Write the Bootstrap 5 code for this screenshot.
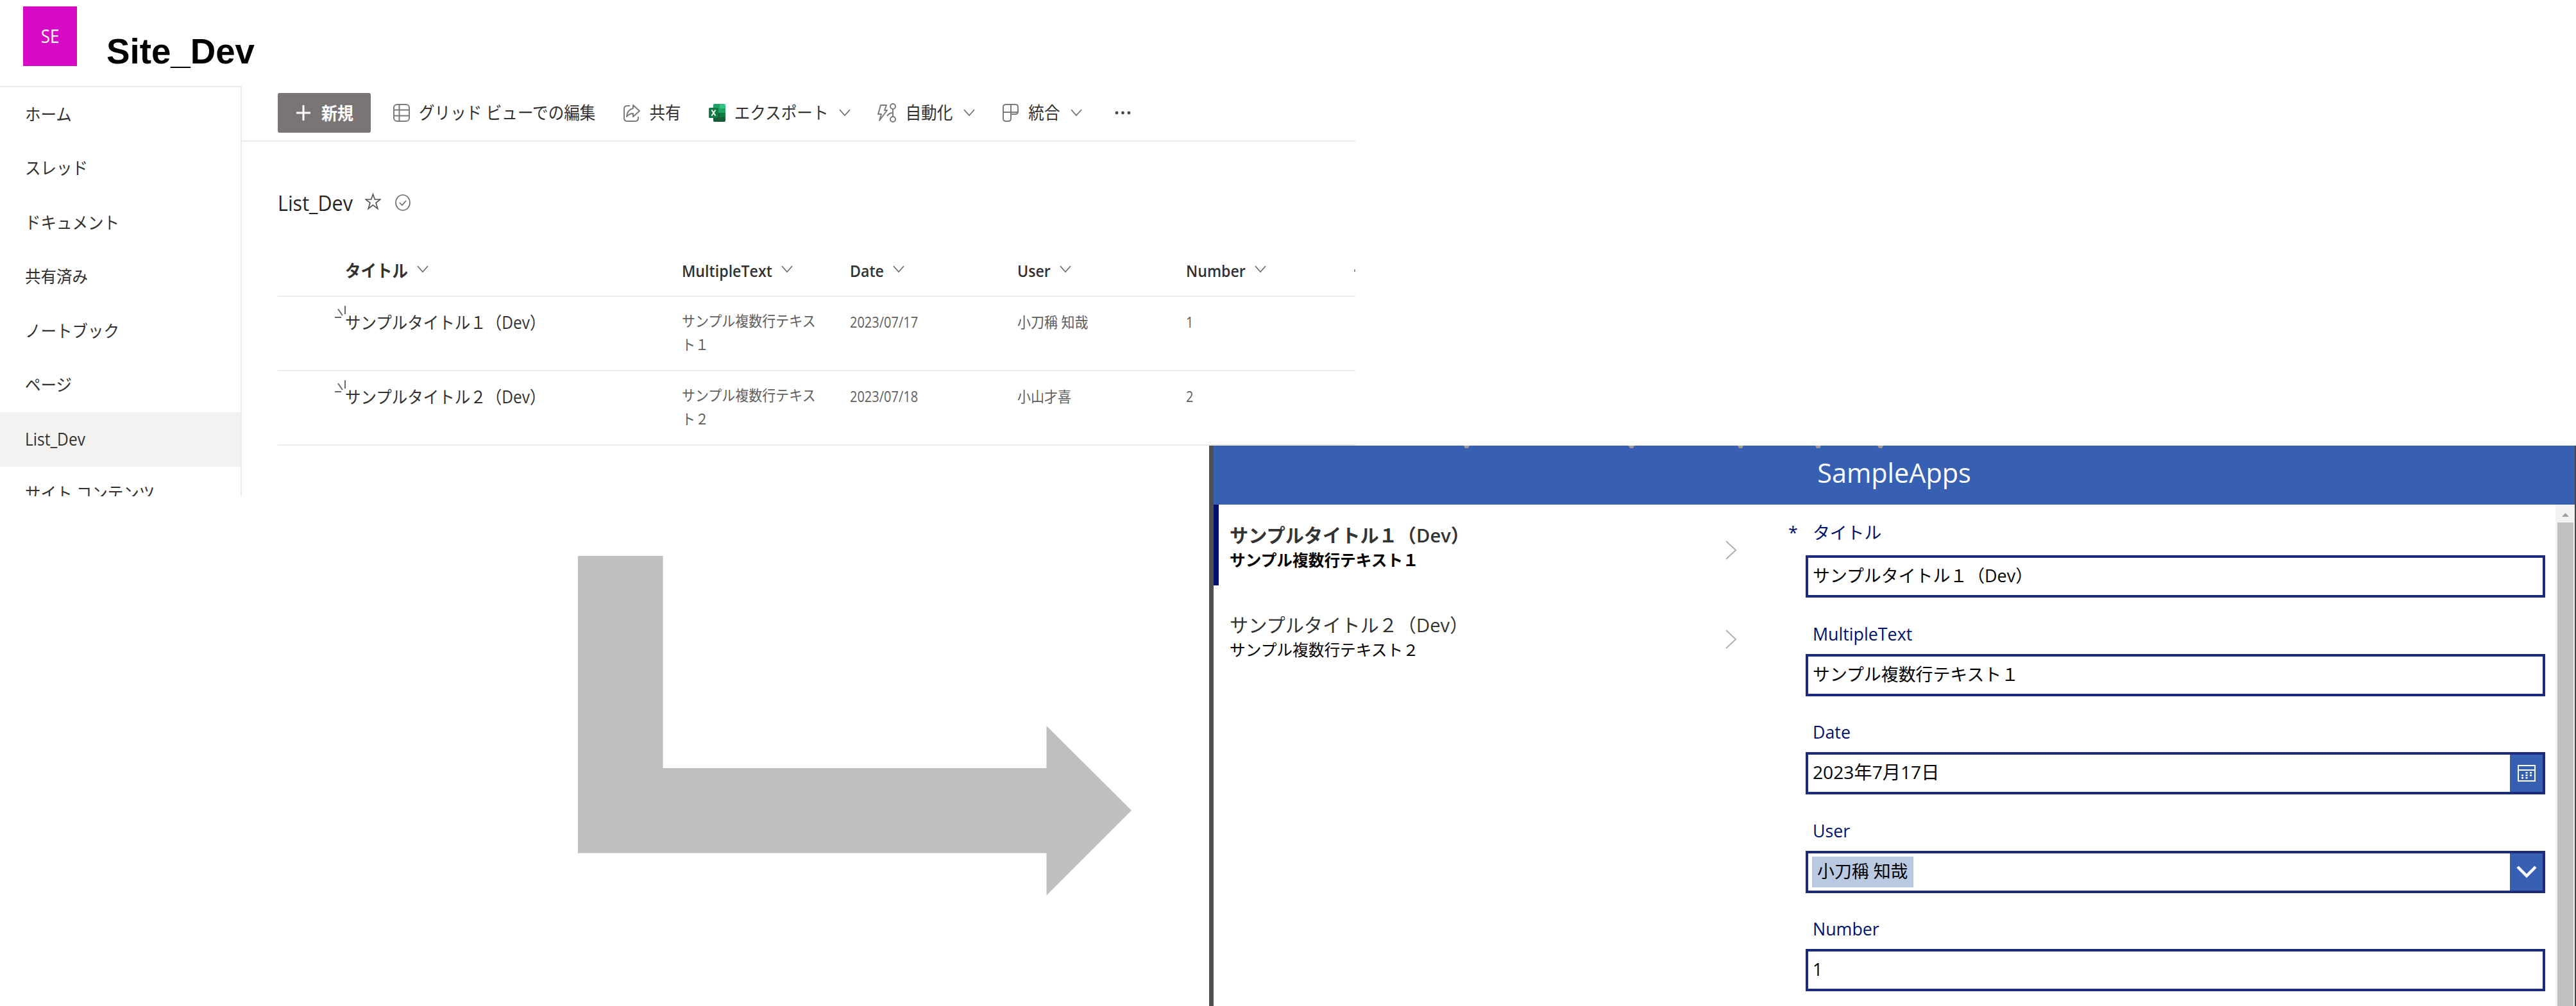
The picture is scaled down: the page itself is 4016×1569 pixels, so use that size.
<!DOCTYPE html>
<html lang="ja">
<head>
  <meta charset="UTF-8" />
  <meta name="viewport" content="width=device-width, initial-scale=1.0"/>
  <title>Site_Dev</title>
  <link rel="stylesheet" href="https://cdn.jsdelivr.net/npm/bootstrap@5.3.2/dist/css/bootstrap.min.css"/>
  <style>
    body {
      font-family: "Open Sans", "Noto Sans CJK JP", sans-serif;
      background: #fff;
      color: #323130;
      overflow: hidden;
    }
    svg {
      display: block;
      flex: none;
    }
    svg:not([fill]) {
      fill: none;
    }
    .board {
      display: grid;
      grid-template-columns: 1885px 2131px;
      grid-template-rows: 695px 874px;
      width: 4016px;
      height: 1569px;
    }

    /* SharePoint list */
    .site {
      grid-area: 1 / 1 / 3 / 3;
      width: 2113px;
      height: 774px;
      overflow: hidden;
    }
    .tx {
      display: inline-block;
      transform: scaleY(1.09);
      white-space: nowrap;
    }
    .site-head {
      height: 134px;
      padding: 10px 0 0 36px;
    }
    .site-logo {
      width: 84px;
      height: 93px;
      background: #d60ac4;
      color: #fff;
      font-size: 26px;
    }
    .site-title {
      margin: 38px 0 0 46px;
      font: bold 54.7px/64px "Liberation Sans", sans-serif;
      color: #000;
    }
    .side-nav {
      width: 377px;
      height: 640px;
      border-top: 2px solid #edebe9;
      border-right: 2px solid #edebe9;
      flex: none;
    }
    .side-nav .nav-link {
      height: 84.5px;
      flex: none;
      padding: 0 0 0 39px;
      display: flex;
      align-items: center;
      font-size: 24.5px;
      color: #323130;
    }
    .side-nav .nav-link.active {
      background: #f3f2f1;
    }
    .cmd-bar {
      height: 87px;
      padding: 11px 0 13px 56px;
      border-bottom: 2px solid #edebe9;
      font-size: 24.6px;
      line-height: 62px;
    }
    .btn-new {
      width: 145px;
      height: 62px;
      padding: 0 0 0 27px;
      border-radius: 3px;
      background: #7a7574;
      color: #fff;
      font-size: 25px;
      font-weight: 700;
      line-height: 60px;
    }
    .btn-new:hover { background: #605e5c; color: #fff; }
    .cmd {
      display: flex;
      align-items: center;
      gap: 14px;
      flex: none;
    }
    .cmd .chev { margin-left: 3px; }
    .list-name {
      height: 168px;
      padding: 24px 0 0 56px;
      font-size: 30.5px;
      font-weight: 500;
      color: #252423;
    }
    .list-table {
      width: 1680px;
      margin: 0 0 0 56px;
      table-layout: fixed;
      color: #605e5c;
      font-size: 21px;
      line-height: 34px;
    }
    .list-table th, .list-table td {
      padding: 0;
      border-bottom: 2px solid #edebe9;
      background: none;
      color: inherit;
      vertical-align: top;
    }
    .list-table th {
      height: 73px;
      padding-top: 16px;
      font-size: 23.2px;
      font-weight: 600;
      color: #323130;
    }
    .list-table th .chev { margin: -4px 0 0 14px; }
    .list-table td {
      height: 116px;
      padding-top: 22px;
    }
    .list-table td.item-title {
      font-size: 24.5px;
      color: #323130;
      padding-top: 23px;
      position: relative;
    }
    .list-table td.item-title svg {
      position: absolute;
      left: -16px;
      top: 14px;
    }
    .list-table .date { font-size: 20px; transform: scaleY(1.15); }

    .flow-arrow {
      grid-area: 2 / 1;
      margin: 172px 0 0 901px;
    }

    /* Power Apps window */
    .app {
      grid-area: 2 / 2;
      border-left: 7px solid #505050;
      border-right: 2px solid #444;
      background: #fff;
      overflow: hidden;
    }
    .app-head {
      height: 92px;
      flex: none;
      background: #3760b2;
      color: #fff;
      font-size: 41.4px;
      line-height: 84px;
      text-align: center;
      position: relative;
    }
    .app-head svg {
      position: absolute;
      left: 0;
      top: 0;
    }
    .gallery {
      width: 880px;
      flex: none;
    }
    .gallery-item {
      height: 140px;
      padding: 0 64px 0 17px;
      border-left: 8px solid transparent;
      color: #000;
      background-clip: padding-box;
    }
    .gallery-item.selected {
      font-weight: 700;
    }
    .gallery-item.selected .sel-bar { background: #00126b; }
    .sel-bar {
      width: 8px;
      height: 126px;
      margin-left: -25px;
      margin-right: 17px;
      align-self: flex-start;
    }
    .g-title {
      font-size: 29.2px;
      line-height: 40px;
      color: #333;
    }
    .selected .g-title { font-weight: 600; }
    .g-sub {
      font-size: 24.7px;
      line-height: 37px;
    }
    .edit-form {
      padding: 22px 0 0 43px;
      width: 1212px;
    }
    .field {
      height: 153.6px;
    }
    .field .form-label {
      display: block;
      height: 57px;
      margin: 0;
      padding-left: 11px;
      font-size: 26.8px;
      line-height: 51px;
      color: #00126b;
    }
    .field:first-child .form-label {
      line-height: 43px;
    }
    .field .req {
      display: inline-block;
      width: 38px;
      margin-left: -38px;
    }
    .field .form-control {
      display: flex;
      width: 1153px;
      height: 66px;
      padding: 0 0 0 7px;
      border: 4px solid #1c2b7c;
      border-radius: 0;
      font-size: 26.9px;
      line-height: 55px;
      color: #000;
    }
    .field .form-control.date-box { font-size: 28.2px; }
    .chip {
      height: 48px;
      margin: 5px 0 0 -1px;
      padding: 0 9px 0 8px;
      background: #b9c9e1;
      line-height: 46px;
    }
    .pick {
      width: 51px;
      margin-left: auto;
      background: #3760b2;
    }
    .scroll {
      width: 30px;
      padding: 0 2px 0 3px;
      background: #f3f3f3;
      margin-left: auto;
    }
    .scroll-thumb {
      background: #c1c1c1;
    }
  </style>
</head>
<body>

<div class="board">

  <!-- SharePoint site -->
  <section class="site">
    <header class="site-head d-flex">
      <div class="site-logo d-flex align-items-center justify-content-center"><span class="tx">SE</span></div>
      <h1 class="site-title">Site_Dev</h1>
    </header>

    <div class="d-flex">
      <nav class="side-nav nav flex-column flex-nowrap overflow-hidden">
        <a class="nav-link"><span class="tx">ホーム</span></a>
        <a class="nav-link"><span class="tx">スレッド</span></a>
        <a class="nav-link"><span class="tx">ドキュメント</span></a>
        <a class="nav-link"><span class="tx">共有済み</span></a>
        <a class="nav-link"><span class="tx">ノートブック</span></a>
        <a class="nav-link"><span class="tx">ページ</span></a>
        <a class="nav-link active"><span class="tx">List_Dev</span></a>
        <a class="nav-link"><span class="tx">サイト コンテンツ</span></a>
      </nav>

      <main class="flex-grow-1">
        <div class="cmd-bar d-flex align-items-center">
          <button class="btn btn-new d-flex align-items-center">
            <svg width="24" height="24" viewBox="0 0 24 24" stroke="#fff" stroke-width="3"><path d="M12 0v24M1 12h22"/></svg>
            <span class="tx ms-3">新規</span>
          </button>
          <div class="cmd" style="margin-left:35px">
            <svg width="26" height="28" viewBox="0 0 26 28" stroke="#7d7b79" stroke-width="2"><rect x="1" y="1" width="24" height="26" rx="5"/><path d="M9.500 1v26M1 9.500h24M1 18.500h24"/></svg>
            <span class="tx">グリッド ビューでの編集</span>
          </div>
          <div class="cmd" style="margin-left:44px">
            <svg width="26" height="28" viewBox="0 0 26 28" stroke="#7d7b79" stroke-width="2"><path d="M10 3H6Q1 3 1 8v14q0 5 5 5h12q5 0 5-5v-2"/><path d="M15 2l10 9-10 9v-5q-6 0-10 5Q6 9 15 7z" stroke-linejoin="round"/></svg>
            <span class="tx">共有</span>
          </div>
          <div class="cmd" style="margin-left:43px">
            <svg width="26" height="28" viewBox="0 0 26 28"><path d="M7 2q0-2 2-2h8v14H7z" fill="#21a366"/><path d="M17 0h7q2 0 2 2v5h-9z" fill="#33c481"/><path d="M17 7h9v7h-9z" fill="#21a366"/><path d="M7 14h10v7H7z" fill="#185c37"/><path d="M17 14h9v7h-9z" fill="#107c41"/><path d="M7 21h19v5q0 2-2 2H9q-2 0-2-2z" fill="#185c37"/><rect y="6" width="15" height="16" rx="1.500" fill="#107c41"/><path d="M4.500 9.500l6 9M10.500 9.500l-6 9" stroke="#fff" stroke-width="2"/></svg>
            <span class="tx">エクスポート</span>
            <svg class="chev" width="18" height="12" viewBox="0 0 18 12" stroke="#6b6967" stroke-width="1.600"><path d="M1 1l8 9 8-9"/></svg>
          </div>
          <div class="cmd" style="margin-left:42px">
            <svg width="29" height="30" viewBox="0 0 29 30" stroke="#7d7b79" stroke-width="2"><path d="M5 3h9l-3 8h4L3 27l3-10H1z" stroke-linejoin="round"/><circle cx="24" cy="5" r="4"/><circle cx="24" cy="25" r="4"/><path d="M24 9v12M15 20q3-5 9-5"/></svg>
            <span class="tx">自動化</span>
            <svg class="chev" width="18" height="12" viewBox="0 0 18 12" stroke="#6b6967" stroke-width="1.600"><path d="M1 1l8 9 8-9"/></svg>
          </div>
          <div class="cmd" style="margin-left:43px">
            <svg width="26" height="28" viewBox="0 0 26 28" stroke="#7d7b79" stroke-width="2"><path d="M5 1h15q4 0 4 4v7q0 4-4 4h-7v7q0 4-4 4H5q-4 0-4-4V5q0-4 4-4zM13 1v15M1 13h23"/></svg>
            <span class="tx">統合</span>
            <svg class="chev" width="18" height="12" viewBox="0 0 18 12" stroke="#6b6967" stroke-width="1.600"><path d="M1 1l8 9 8-9"/></svg>
          </div>
          <svg style="margin-left:51px" width="25" height="6" viewBox="0 0 25 6" fill="#484644"><circle cx="3" cy="3" r="2.400"/><circle cx="12.500" cy="3" r="2.400"/><circle cx="22" cy="3" r="2.400"/></svg>
        </div>

        <div class="list-name d-flex align-items-center">
          <span class="tx">List_Dev</span>
          <svg style="margin:-6px 0 0 19px" width="25" height="28" viewBox="0 0 25 28" stroke="#555" stroke-width="1.700"><path d="M12.500 3l2.800 8H24l-7 5.300 2.800 9.200-7.300-5.700-7.300 5.700L8 16.300 1 11h8.700z"/></svg>
          <svg style="margin:-3px 0 0 22px" width="24" height="26" viewBox="0 0 24 26" stroke="#6b6967" stroke-width="1.600"><ellipse cx="12" cy="13" rx="11" ry="12"/><path d="M7 13l4 4 6-7"/></svg>
        </div>

        <table class="table list-table mb-0">
          <colgroup>
            <col style="width:105px"><col style="width:525px"><col style="width:262px"><col style="width:261px"><col style="width:263px"><col>
          </colgroup>
          <thead>
            <tr>
              <th></th>
              <th><div class="d-flex align-items-center"><span class="tx" style="font-size:24.500px;font-weight:700">タイトル</span><svg class="chev" width="18" height="12" viewBox="0 0 18 12" stroke="#6b6967" stroke-width="1.600"><path d="M1 1l8 9 8-9"/></svg></div></th>
              <th><div class="d-flex align-items-center"><span class="tx">MultipleText</span><svg class="chev" width="18" height="12" viewBox="0 0 18 12" stroke="#6b6967" stroke-width="1.600"><path d="M1 1l8 9 8-9"/></svg></div></th>
              <th><div class="d-flex align-items-center"><span class="tx">Date</span><svg class="chev" width="18" height="12" viewBox="0 0 18 12" stroke="#6b6967" stroke-width="1.600"><path d="M1 1l8 9 8-9"/></svg></div></th>
              <th><div class="d-flex align-items-center"><span class="tx">User</span><svg class="chev" width="18" height="12" viewBox="0 0 18 12" stroke="#6b6967" stroke-width="1.600"><path d="M1 1l8 9 8-9"/></svg></div></th>
              <th><div class="d-flex align-items-center"><span class="tx">Number</span><svg class="chev" width="18" height="12" viewBox="0 0 18 12" stroke="#6b6967" stroke-width="1.600"><path d="M1 1l8 9 8-9"/></svg><svg class="ms-auto" width="2" height="4"><rect width="2" height="4" fill="#999"/></svg></div></th>
            </tr>
          </thead>
          <tbody>
            <tr>
              <td></td>
              <td class="item-title"><svg width="18" height="20" viewBox="0 0 18 20" stroke="#6b6967" stroke-width="2"><path d="M16 0v13M5 5l7 10M0 18h10"/></svg><span class="tx">サンプルタイトル１（Dev）</span></td>
              <td><span class="tx">サンプル複数行テキス<br>ト１</span></td>
              <td><span class="tx date">2023/07/17</span></td>
              <td><span class="tx">小刀稱 知哉</span></td>
              <td><span class="tx date">1</span></td>
            </tr>
            <tr>
              <td></td>
              <td class="item-title"><svg width="18" height="20" viewBox="0 0 18 20" stroke="#6b6967" stroke-width="2"><path d="M16 0v13M5 5l7 10M0 18h10"/></svg><span class="tx">サンプルタイトル２（Dev）</span></td>
              <td><span class="tx">サンプル複数行テキス<br>ト２</span></td>
              <td><span class="tx date">2023/07/18</span></td>
              <td><span class="tx">小山才喜</span></td>
              <td><span class="tx date">2</span></td>
            </tr>
          </tbody>
        </table>
      </main>
    </div>
  </section>

  <!-- Arrow from the list to the app -->
  <svg class="flow-arrow" width="864" height="530" viewBox="0 0 864 530"><path d="M0 0h132.500v331h598v-66L863 397 730.500 529.500v-66H0z" fill="#bfbfbf"/></svg>

  <!-- Power Apps window -->
  <section class="app d-flex flex-column">
    <header class="app-head">
      <svg width="1100" height="5" viewBox="0 0 1100 5" fill="#a09c94"><path d="M390 0h9l-2 4h-5zM647 0h9l-2 4h-5zM817 0h9l-2 4h-5zM938 0h9l-2 4h-5zM1035 0h9l-2 4h-5z"/></svg>
      SampleApps
    </header>
    <div class="d-flex flex-grow-1">
      <div class="gallery">
        <div class="gallery-item selected d-flex">
          <div class="sel-bar"></div>
          <div class="flex-grow-1 pt-4 mt-1">
            <div class="g-title">サンプルタイトル１（Dev）</div>
            <div class="g-sub">サンプル複数行テキスト１</div>
          </div>
          <svg style="margin-top:56px" width="18" height="30" viewBox="0 0 18 30" stroke="#b0b0b0" stroke-width="2"><path d="M1 1l15 14L1 29"/></svg>
        </div>
        <div class="gallery-item d-flex">
          <div class="sel-bar"></div>
          <div class="flex-grow-1 pt-4 mt-1">
            <div class="g-title">サンプルタイトル２（Dev）</div>
            <div class="g-sub">サンプル複数行テキスト２</div>
          </div>
          <svg style="margin-top:55px" width="18" height="30" viewBox="0 0 18 30" stroke="#b0b0b0" stroke-width="2"><path d="M1 1l15 14L1 29"/></svg>
        </div>
      </div>

      <div class="edit-form">
        <div class="field">
          <label class="form-label"><span class="req">*</span>タイトル</label>
          <div class="form-control">サンプルタイトル１（Dev）</div>
        </div>
        <div class="field">
          <label class="form-label">MultipleText</label>
          <div class="form-control">サンプル複数行テキスト１</div>
        </div>
        <div class="field">
          <label class="form-label">Date</label>
          <div class="form-control date-box">2023年7月17日
            <span class="pick d-flex align-items-center justify-content-center">
              <svg width="28" height="26" viewBox="0 0 28 26"><path d="M1 1h26v24H1zM1 8h26" stroke="#fff" stroke-width="2"/><path d="M12.500 11h3v2.500h-3zM19 11h3v2.500h-3zM6 15h3v2.500H6zM12.500 15h3v2.500h-3zM19 15h3v2.500h-3zM6 19h3v2.500H6zM12.500 19h3v2.500h-3z" fill="#fff"/></svg>
            </span>
          </div>
        </div>
        <div class="field">
          <label class="form-label">User</label>
          <div class="form-control"><span class="chip">小刀稱 知哉</span>
            <span class="pick d-flex align-items-center justify-content-center">
              <svg width="32" height="20" viewBox="0 0 32 20" stroke="#fff" stroke-width="4.500"><path d="M2 2l14 14L30 2"/></svg>
            </span>
          </div>
        </div>
        <div class="field">
          <label class="form-label">Number</label>
          <div class="form-control">1</div>
        </div>
      </div>

      <div class="scroll d-flex flex-column">
        <svg width="25" height="28" viewBox="0 0 25 28" fill="#a0a0a0"><path d="M7 19l5.500-6 5.500 6z"/></svg>
        <div class="scroll-thumb flex-grow-1"></div>
      </div>
    </div>
  </section>

</div>

<script src="https://cdn.jsdelivr.net/npm/bootstrap@5.3.2/dist/js/bootstrap.bundle.min.js"></script>
</body>
</html>
